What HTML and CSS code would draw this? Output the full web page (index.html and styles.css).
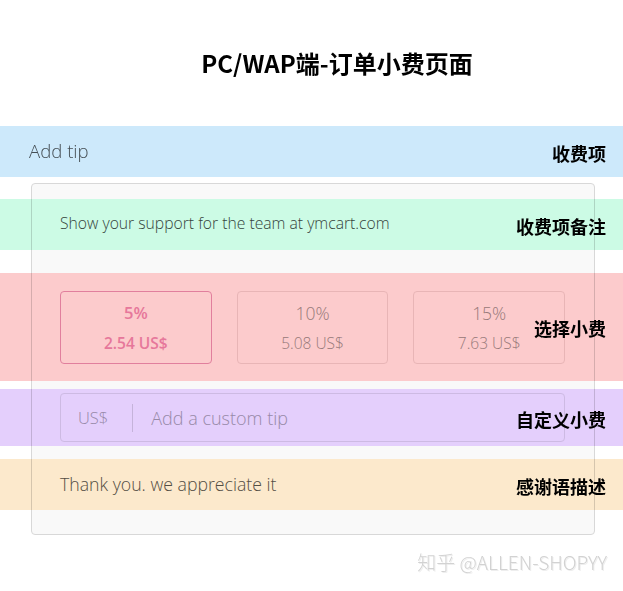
FILE: index.html
```html
<!doctype html>
<html lang="zh-CN">
<head>
	<meta charset="UTF-8">
	<title>PC/WAP端-订单小费页面</title>
<link rel="stylesheet" href="styles.css">
</head>
<body>
	<h1 class="title">PC/WAP端-订单小费页面</h1>

	<div class="sec sec-head blue">
		<span class="head-text">Add tip</span>
		<span class="tag">收费项</span>
	</div>

	<div class="card">
		<div class="sec sec-note green">
			<span class="note-text">Show your support for the team at ymcart.com</span>
			<span class="tag">收费项备注</span>
		</div>

		<div class="sec sec-opts pink">
			<ul class="opts">
				<li class="opt active">
					<span class="pct">5%</span>
					<span class="amt">2.54 US$</span>
				</li>
				<li class="opt">
					<span class="pct">10%</span>
					<span class="amt">5.08 US$</span>
				</li>
				<li class="opt">
					<span class="pct">15%</span>
					<span class="amt">7.63 US$</span>
				</li>
			</ul>
			<span class="tag">选择小费</span>
		</div>

		<div class="sec sec-custom purple">
			<div class="custom">
				<span class="cur">US$</span>
				<span class="ph">Add a custom tip</span>
			</div>
			<span class="tag">自定义小费</span>
		</div>

		<div class="sec sec-thanks orange">
			<span class="thanks-text">Thank you. we appreciate it</span>
			<span class="tag">感谢语描述</span>
		</div>
	</div>

	<p class="mark">知乎 @ALLEN-SHOPYY</p>
</body>
</html>
```

FILE: styles.css
```css
body{
	margin: 0;
	width: 623px;
	background: #fff;
	font-family: "Open Sans", "Noto Sans CJK SC", sans-serif;
	color: #666;
}
.title{
	margin: 0;
	padding: 45px 0 0 51px;
	height: 126px;
	box-sizing: border-box;
	line-height: 36px;
	text-align: center;
	font-family: "Noto Sans CJK SC", sans-serif;
	font-size: 24px;
	font-weight: bold;
	color: #000;
}

/* 标注色条 */
.sec{
	position: relative;
	display: flex;
	align-items: center;
	background: #fff;
}
.sec:before{
	content: '';
	position: absolute;
	top: 0;
	bottom: 0;
	left: -32px;
	right: -29px;
	mix-blend-mode: multiply;
}
.blue:before{ background: #cde9fb; }
.green:before{ background: #ccfbe5; }
.pink:before{ background: #fccbcc; }
.purple:before{ background: #e4cffc; }
.orange:before{ background: #fce9cc; }

.tag{
	position: absolute;
	right: -12px;
	top: 0;
	bottom: 0;
	display: flex;
	align-items: center;
	padding-top: 2px;
	font-family: "Noto Sans CJK SC", sans-serif;
	font-size: 18px;
	font-weight: bold;
	color: #000;
}

.sec-head{
	height: 51px;
	padding-left: 29px;
	padding-bottom: 3px;
	box-sizing: border-box;
	background: none;
}
.sec-head:before{
	left: 0;
	right: 0;
}
.sec-head .tag{
	right: 17px;
}
.head-text{
	font-size: 18.6px;
	font-weight: 300;
	color: #555;
}

.card{
	margin: 6px 28px 0 31px;
	border: 1px solid #d8d8d8;
	border-radius: 4px;
	padding: 15px 0 24px;
	background: #f9f9f9;
}
.sec-note{
	height: 51px;
	padding: 0 0 4px 28px;
	box-sizing: border-box;
}
.note-text{
	font-size: 15.7px;
	font-weight: 300;
	color: #444;
}

.sec-opts{
	margin-top: 23px;
	height: 108px;
	padding: 0 29px 0 28px;
}
.opts{
	margin: 0;
	padding: 0;
	list-style: none;
	display: flex;
	gap: 25px;
	flex: 1;
}
.opt{
	flex: 1;
	height: 73px;
	box-sizing: border-box;
	border: 1px solid #ebe4e4;
	border-radius: 4px;
	background: #fff;
	display: flex;
	flex-direction: column;
	align-items: center;
	justify-content: center;
	gap: 9px;
	color: #999;
}
.pct{
	font-size: 17.5px;
	font-weight: 300;
	line-height: 22px;
}
.amt{
	font-size: 15.5px;
	font-weight: 300;
	line-height: 20px;
}
.active{
	border-color: #e4a0c4;
	color: #e996c2;
}
.active .pct,
.active .amt{
	font-size: 16.5px;
	font-weight: 600;
}
.active .amt{
	font-size: 15.5px;
}

.sec-custom{
	margin-top: 8px;
	height: 57px;
	padding: 0 29px 0 28px;
}
.custom{
	flex: 1;
	height: 49px;
	box-sizing: border-box;
	border: 1px solid #e6e6e6;
	border-radius: 4px;
	background: #fff;
	display: flex;
	align-items: center;
	color: #aaa;
}
.cur{
	font-size: 16.5px;
	font-weight: 300;
	padding: 0 24px 0 17px;
	border-right: 1px solid #ddd;
	line-height: 28px;
}
.ph{
	font-size: 18px;
	font-weight: 300;
	padding-left: 18px;
}

.sec-thanks{
	margin-top: 13px;
	height: 51px;
	padding: 0 0 2px 28px;
	box-sizing: border-box;
}
.thanks-text{
	font-size: 17.7px;
	font-weight: 300;
	color: #555;
}

.mark{
	margin: 13px 16px 0 0;
	text-align: right;
	font-family: "Noto Sans CJK SC", sans-serif;
	font-size: 19px;
	font-weight: 300;
	color: #d2d2d2;
	text-shadow: 1px 1px 0 #eee;
}
```
